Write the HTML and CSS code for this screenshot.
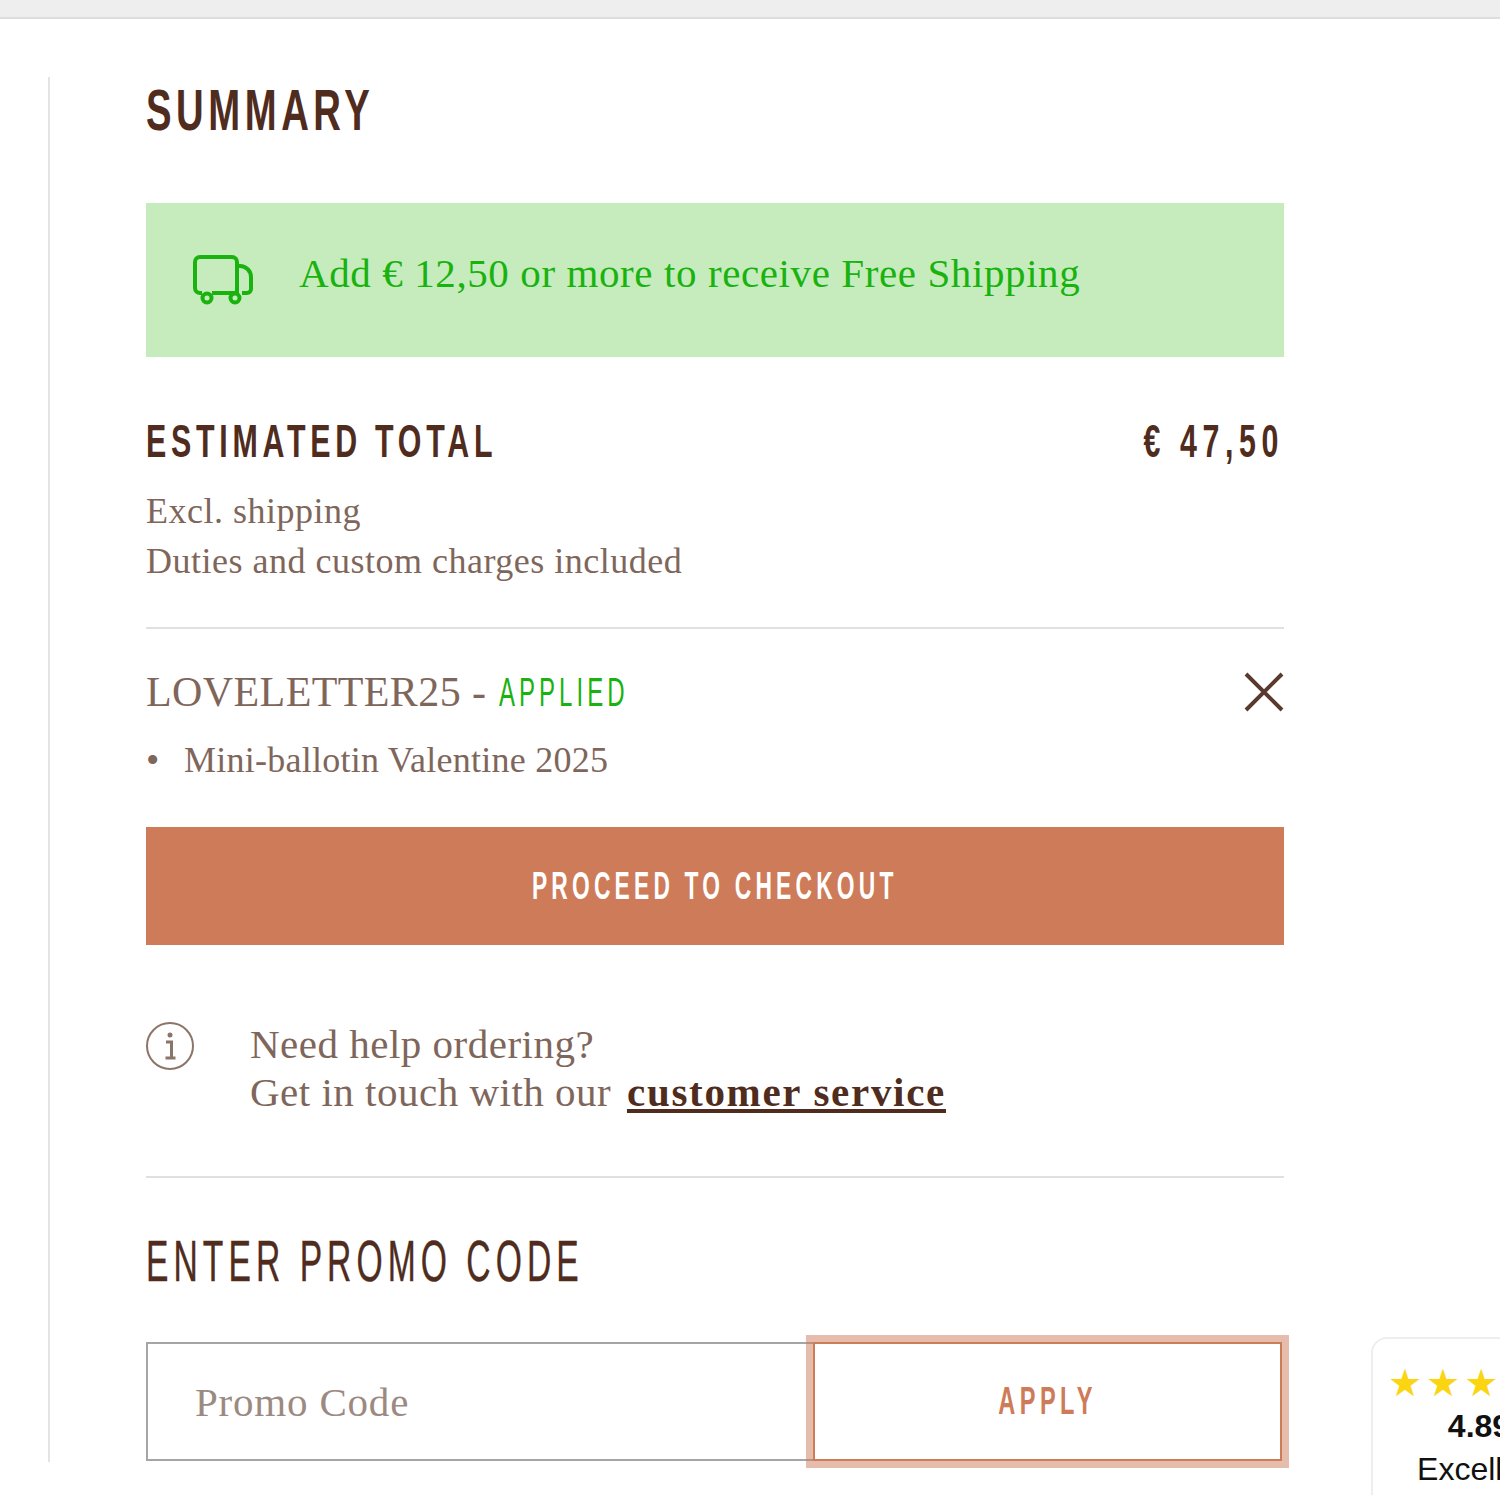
FILE: index.html
```html
<!DOCTYPE html>
<html lang="en">
<head>
    <meta charset="UTF-8">
    <title>Summary</title>
    <link rel="stylesheet" href="styles.css">
</head>
<body>

    <div class="topbar"></div>

    <div class="page">
        <div class="summary">
            <h2 class="title">SUMMARY</h2>

            <!-- Free shipping banner -->
            <div class="shipping">
                <svg class="truck" width="60" height="50" viewBox="0 0 60 50" fill="none" stroke="#19b20f" stroke-width="4">
                    <path d="M9 38H7a5 5 0 0 1-5-5V7a5 5 0 0 1 5-5h32a5 5 0 0 1 5 5v31H19"/>
                    <path d="M44 11h3a11 11 0 0 1 11 11v12a4 4 0 0 1-4 4h-5M36 38h-1"/>
                    <circle cx="14" cy="43" r="4.500"/>
                    <circle cx="42" cy="43" r="4.500"/>
                </svg>
                <span class="shipping-text">Add € 12,50 or more to receive Free Shipping</span>
            </div>

            <div class="total-row">
                <h3 class="total-label">ESTIMATED TOTAL</h3>
                <span class="total-price">€ 47,50</span>
            </div>
            <p class="note">Excl. shipping<br>Duties and custom charges included</p>

            <hr class="rule">

            <div class="code-row">
                <span class="code-name">LOVELETTER25 - <span class="applied">APPLIED</span></span>
                <svg class="close" width="40" height="40" viewBox="0 0 40 40" stroke="#5b3a2e" stroke-width="4" fill="none">
                    <path d="M2 2l36 36M38 2L2 38"/>
                </svg>
            </div>
            <ul class="code-items">
                <li>Mini-ballotin Valentine 2025</li>
            </ul>

            <button class="checkout"><span class="checkout-text">PROCEED TO CHECKOUT</span></button>

            <div class="help">
                <svg class="info" width="48" height="48" viewBox="0 0 48 48" fill="none">
                    <circle cx="24" cy="24" r="23" stroke="#8c7469" stroke-width="2"/>
                    <circle cx="24" cy="13" r="2.500" fill="#8c7469"/>
                    <path d="M20 20h5.500v15M19.500 36h10" stroke="#8c7469" stroke-width="3"/>
                </svg>
                <p class="help-text">Need help ordering?<br>Get in touch with our <a href="#">customer service</a></p>
            </div>

            <hr class="rule rule-promo">

            <h2 class="promo-title">ENTER PROMO CODE</h2>
            <form class="promo-form">
                <input class="promo-input" type="text" placeholder="Promo Code">
                <button class="apply" type="button"><span class="apply-text">APPLY</span></button>
            </form>
        </div>
    </div>

    <!-- Reviews badge -->
    <div class="reviews">
        <div class="stars">★★★★★</div>
        <div class="score">4.89</div>
        <div class="score-label">Excellent</div>
    </div>

</body>
</html>
```

FILE: styles.css
```css
body {
    margin: 0;
    height: 1495px;
    overflow: hidden;
    background-color: #fff;
    color: #5b3a2e;
    font-family: "Liberation Serif", serif;
    position: relative;
}

.topbar {
    height: 17px;
    background-color: #eee;
    border-bottom: 2px solid #ddd;
}

.page {
    padding: 58px 0 0 48px;
}

.summary {
    width: 1138px;
    height: 1385px;
    padding-left: 96px;
    border-left: 2px solid #e4e4e4;
}

/* no condensed font installed, so the headings are squeezed */
.title,
.total-label,
.total-price,
.promo-title,
.applied,
.checkout-text,
.apply-text {
    font-family: "Liberation Sans", sans-serif;
    transform-origin: left center;
}

.title {
    margin: 0;
    font-size: 58px;
    line-height: 66px;
    font-weight: 700;
    letter-spacing: 6.900px;
    color: #4f2c1d;
    transform: scaleX(0.66);
}

.shipping {
    display: flex;
    align-items: center;
    gap: 46px;
    height: 154px;
    margin-top: 60px;
    padding-left: 47px;
    background-color: #c6ecbe;
}

.shipping-text {
    margin-top: -14px;
    font-size: 41px;
    letter-spacing: 0.600px;
    color: #19b20f;
}

.total-row {
    display: flex;
    justify-content: space-between;
    align-items: center;
    margin-top: 58px;
}

.total-label,
.total-price {
    margin: 0;
    font-size: 46px;
    line-height: 52px;
    font-weight: 700;
    letter-spacing: 7.200px;
    color: #4f2c1d;
    transform: scaleX(0.66);
}

.total-price {
    letter-spacing: 8.500px;
    transform-origin: right center;
}

.note {
    margin: 19px 0 0;
    font-size: 36px;
    line-height: 50px;
    letter-spacing: 0.500px;
    color: #7f665b;
}

.rule {
    margin: 41px 0 0;
    border: 0;
    border-top: 2px solid #e0e0e0;
}

.code-row {
    display: flex;
    justify-content: space-between;
    align-items: center;
    margin-top: 41px;
}

.code-name {
    font-size: 42px;
    line-height: 44px;
    letter-spacing: 0.400px;
    color: #7f665b;
}

.applied {
    display: inline-block;
    margin-left: 2px;
    font-size: 40px;
    line-height: 40px;
    letter-spacing: 6.700px;
    color: #19b20f;
    transform: scaleX(0.6);
}

.close {
    display: block;
}

.code-items {
    margin: 24px 0 0;
    padding: 0;
    list-style: none;
    font-size: 36px;
    line-height: 44px;
    letter-spacing: 0.250px;
    color: #7f665b;
}

.code-items li {
    display: flex;
}

.code-items li::before {
    content: "•";
    width: 38px;
    flex-shrink: 0;
    font-size: 38px;
}

.checkout {
    display: block;
    width: 100%;
    height: 118px;
    margin-top: 45px;
    border: none;
    background-color: #cd7b59;
    color: #fff;
}

.checkout-text {
    display: inline-block;
    font-size: 38px;
    font-weight: 700;
    letter-spacing: 7px;
    white-space: nowrap;
    transform: scaleX(0.6);
    transform-origin: center;
}

.help {
    display: flex;
    gap: 56px;
    margin-top: 77px;
}

.info {
    flex-shrink: 0;
}

.help-text {
    margin: -2px 0 0;
    font-size: 41px;
    line-height: 48px;
    letter-spacing: 0.500px;
    color: #7f665b;
}

.help-text a {
    margin-left: 5px;
    color: #4f2c1d;
    font-weight: 700;
    letter-spacing: 1.700px;
}

.rule-promo {
    margin-top: 60px;
}

.promo-title {
    margin: 50px 0 0;
    font-size: 58px;
    line-height: 66px;
    font-weight: 400;
    letter-spacing: 8.700px;
    color: #4f2c1d;
    -webkit-text-stroke: 0.4px #4f2c1d;
    transform: scaleX(0.58);
}

.promo-form {
    display: flex;
    margin-top: 48px;
}

.promo-input {
    box-sizing: border-box;
    width: 667px;
    height: 119px;
    padding: 0 47px;
    border: 2px solid #a5a5a5;
    border-right: none;
    border-radius: 0;
    outline: none;
    font-family: "Liberation Serif", serif;
    font-size: 41px;
    letter-spacing: 0.800px;
    color: #7f665b;
}

.promo-input::placeholder {
    color: #9c8a82;
    opacity: 1;
}

.apply {
    box-sizing: border-box;
    width: 469px;
    height: 119px;
    border: 2px solid #cd7b59;
    outline: 7px solid rgba(205, 123, 89, 0.5);
    background-color: #fff;
    color: #cd7b59;
}

.apply-text {
    display: inline-block;
    font-size: 38px;
    font-weight: 700;
    letter-spacing: 7.200px;
    transform: scaleX(0.62);
    transform-origin: center;
}

.reviews {
    position: absolute;
    left: 1371px;
    top: 1337px;
    width: 222px;
    height: 200px;
    box-sizing: border-box;
    padding-top: 22px;
    border: 2px solid #eee;
    border-radius: 16px;
    background-color: #fff;
    font-family: "Liberation Sans", sans-serif;
    text-align: center;
    color: #111;
}

.stars {
    padding-left: 15px;
    font-family: "DejaVu Sans", sans-serif;
    font-size: 38px;
    line-height: 44px;
    letter-spacing: 4px;
    color: #fbd512;
    text-align: left;
    white-space: nowrap;
}

.score {
    padding-right: 6px;
    font-size: 32px;
    line-height: 42px;
    font-weight: 700;
}

.score-label {
    font-size: 32px;
    line-height: 44px;
}
```
